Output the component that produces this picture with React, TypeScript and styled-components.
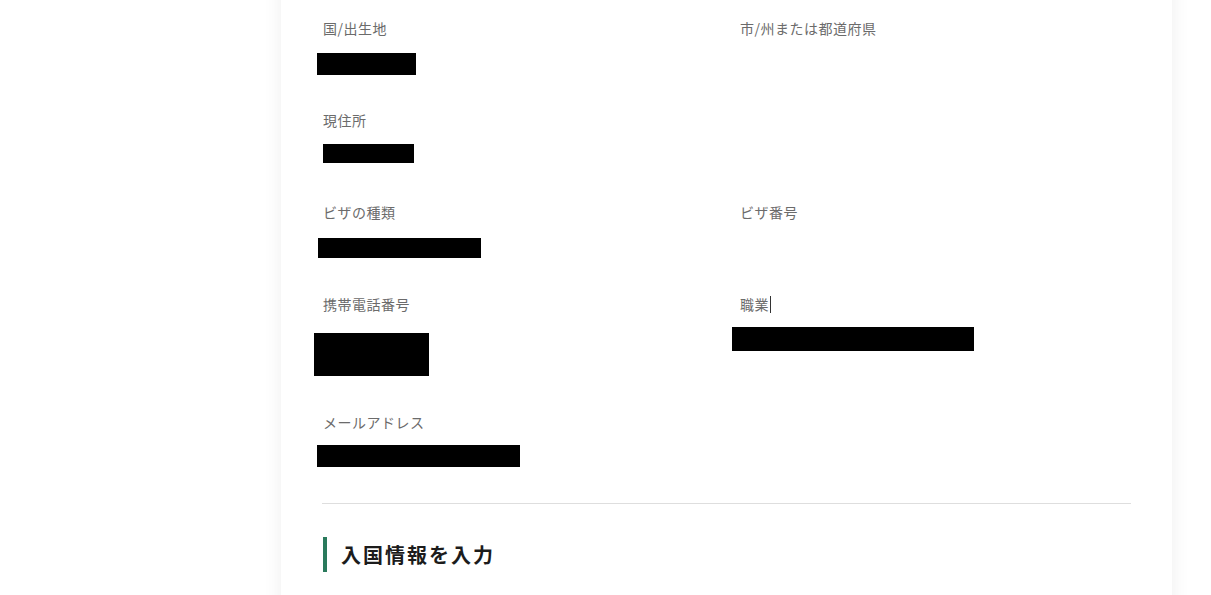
import React, { FC } from 'react'
import styled, { createGlobalStyle } from 'styled-components'

const GlobalStyle = createGlobalStyle`
  html, body {
    margin: 0;
    padding: 0;
    background: #ffffff;
    overflow: hidden;
  }
  body {
    font-family: "Noto Sans CJK JP", "Noto Sans", sans-serif;
  }
`

type Redaction = {
  width: number,
  height: number,
  top?: number,
  left?: number,
}

type FieldProps = {
  label: string,
  value?: Redaction,
  tall?: boolean,
  caret?: boolean,
}

const Page = styled.div`
  width: 1211px;
  height: 595px;
  overflow: hidden;
`

const Card = styled.div`
  margin: -20px 0 0 281px;
  width: 891px;
  min-height: 640px;
  background: #ffffff;
  box-shadow: 0 0 18px rgba(0, 0, 0, 0.07);
  padding: 39px 41px 0 42px;
  box-sizing: border-box;
`

const Grid = styled.div`
  display: grid;
  grid-template-columns: 417px 1fr;
  row-gap: 36px;
`

const FieldBox = styled.div<{ $tall?: boolean }>`
  display: flex;
  flex-direction: column;
  min-height: ${({ $tall }) => ($tall ? 82 : 56)}px;
`

const Label = styled.div`
  margin: -1px 0 1px 0;
  font-size: 14px;
  line-height: 20px;
  color: #6b6b6b;
  letter-spacing: 0.5px;
  display: flex;
  align-items: center;
`

const Caret = styled.span`
  display: inline-block;
  width: 1px;
  height: 17px;
  margin-left: 1px;
  background: #333333;
`

const Value = styled.div`
  margin-top: 12px;
  display: flex;
  align-items: flex-start;
`

const Blackout = styled.span<{ $w: number, $h: number, $top: number, $left: number }>`
  display: block;
  width: ${({ $w }) => $w}px;
  height: ${({ $h }) => $h}px;
  margin-top: ${({ $top }) => $top}px;
  margin-left: ${({ $left }) => $left}px;
  background: #000000;
`

const Divider = styled.div`
  margin-top: 34px;
  margin-left: -1px;
  width: 809px;
  height: 1px;
  background: #dedede;
`

const SectionTitle = styled.h2`
  margin: 33px 0 0 0;
  height: 35px;
  display: flex;
  align-items: center;
  padding-left: 14px;
  border-left: 4px solid #2a7a5c;
  font-size: 20px;
  font-weight: 700;
  letter-spacing: 2px;
  color: #1c1c1c;
`

const Field: FC<FieldProps> = ({ label, value, tall, caret }) => (
  <FieldBox $tall={tall}>
    <Label>
      {label}
      {caret && <Caret />}
    </Label>
    <Value>
      {value && (
        <Blackout
          $w={value.width}
          $h={value.height}
          $top={value.top ?? 0}
          $left={value.left ?? 0}
        />
      )}
    </Value>
  </FieldBox>
)

const fields: FieldProps[] = [
  { label: '国/出生地', value: { width: 99, height: 22, top: 2, left: -6 } },
  { label: '市/州または都道府県' },
  { label: '現住所', value: { width: 91, height: 19, top: 1, left: 0 } },
  { label: '' },
  { label: 'ビザの種類', value: { width: 163, height: 20, top: 3, left: -5 } },
  { label: 'ビザ番号' },
  { label: '携帯電話番号', tall: true, value: { width: 115, height: 43, top: 6, left: -9 } },
  { label: '職業', tall: true, caret: true, value: { width: 242, height: 24, top: 0, left: -8 } },
  { label: 'メールアドレス', value: { width: 203, height: 22, top: 0, left: -6 } },
]

const App: FC = () => {
  return (
    <Page>
      <GlobalStyle />
      <Card>
        <Grid>
          {fields.map((f, i) => (
            <Field key={i} {...f} />
          ))}
        </Grid>
        <Divider />
        <SectionTitle>入国情報を入力</SectionTitle>
      </Card>
    </Page>
  )
}

export default App
